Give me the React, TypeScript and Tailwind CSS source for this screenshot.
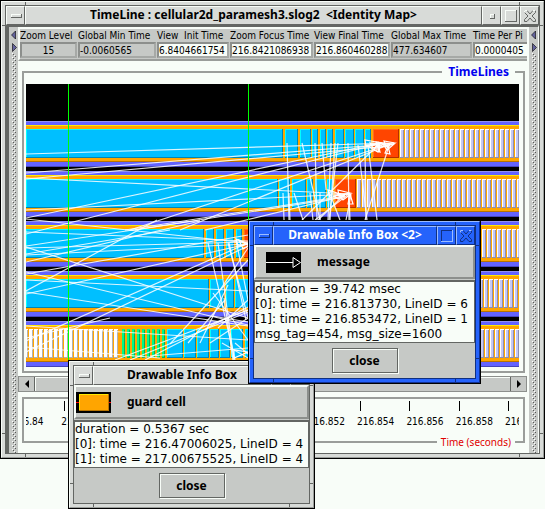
import React, { type ReactNode } from "react";

type Segment = [number, number, number, number];
type Span = [number, number];

/* ---------- timeline data (canvas coordinates) ---------- */

const ROW_TOPS = [121, 171, 221, 271, 321];

const CELLS: { top: number; color: "blue" | "red"; spans: Span[] }[] = [
  { top: 129, color: "blue", spans: [[26, 283], [285, 298], [300, 311], [312, 318], [320, 326], [327, 333], [335, 344], [345, 354], [355, 364], [365, 371]] },
  { top: 129, color: "red", spans: [[373, 399]] },
  { top: 179, color: "blue", spans: [[26, 278], [279, 290], [292, 306], [307, 313], [315, 326], [327, 333]] },
  { top: 179, color: "red", spans: [[335, 356]] },
  { top: 229, color: "blue", spans: [[26, 204], [206, 214], [216, 224], [226, 234], [236, 242]] },
  { top: 229, color: "red", spans: [[244, 262]] },
  { top: 279, color: "blue", spans: [[26, 209], [210, 224], [226, 234], [235, 260]] },
  { top: 329, color: "blue", spans: [[167, 183], [184, 196], [197, 209], [210, 219], [220, 230], [231, 243], [245, 260]] },
];

const STRIPES: { top: number; from: number; to: number; face: string; edge: string; shade: string; width: number }[] = [
  { top: 129, from: 400, to: 519, face: "#c5c8f5", edge: "#ffffff", shade: "#8c8fb4", width: 4 },
  { top: 179, from: 357, to: 519, face: "#c5c8f5", edge: "#ffffff", shade: "#8c8fb4", width: 4 },
  { top: 229, from: 482, to: 519, face: "#c5c8f5", edge: "#ffffff", shade: "#8c8fb4", width: 4 },
  { top: 279, from: 479, to: 519, face: "#c5c8f5", edge: "#ffffff", shade: "#8c8fb4", width: 4 },
  { top: 329, from: 480, to: 519, face: "#c5c8f5", edge: "#ffffff", shade: "#8c8fb4", width: 4 },
  { top: 329, from: 24, to: 118, face: "#ffffff", edge: "#ffffff", shade: "#b2b2b2", width: 4 },
  { top: 329, from: 122, to: 166, face: "#00f884", edge: "#00f884", shade: "#00b060", width: 3 },
];

const MESSAGES: Segment[] = [
  [26, 154, 394, 143], [26, 173, 390, 144], [26, 179, 390, 146], [26, 218, 380, 143],
  [26, 234, 378, 144], [130, 230, 390, 144], [180, 230, 388, 145], [26, 210, 350, 194],
  [26, 178, 350, 194], [26, 219, 248, 243], [125, 230, 345, 196], [135, 230, 345, 197],
  [205, 230, 345, 196], [26, 232, 248, 241], [26, 246, 200, 220], [26, 248, 248, 242],
  [26, 255, 248, 244], [26, 254, 170, 230], [26, 262, 200, 221], [26, 291, 157, 220],
  [26, 247, 248, 318], [26, 272, 248, 325], [26, 280, 248, 291], [26, 274, 248, 235],
  [26, 294, 248, 244], [26, 292, 248, 326], [26, 341, 248, 243], [26, 352, 248, 246],
  [115, 360, 248, 310], [130, 360, 248, 312], [145, 360, 248, 307], [26, 326, 248, 340],
  [26, 338, 110, 318], [26, 347, 160, 358], [150, 356, 248, 348], [208, 243, 235, 360],
  [218, 243, 234, 360], [228, 243, 250, 325], [229, 243, 246, 320], [213, 293, 248, 340],
  [170, 344, 248, 260], [188, 343, 225, 300], [200, 343, 228, 285], [210, 343, 248, 318],
  [222, 343, 248, 358], [235, 343, 248, 354], [220, 290, 248, 248], [224, 298, 233, 360],
  [210, 325, 248, 310], [218, 328, 248, 300], [212, 316, 248, 322], [236, 240, 248, 300],
  [287, 143, 289, 220], [302, 143, 320, 220], [315, 143, 317, 220], [322, 143, 326, 190],
  [331, 143, 328, 220], [335, 143, 330, 220], [338, 143, 329, 220], [348, 143, 349, 220],
  [358, 145, 367, 220], [365, 148, 366, 220], [368, 145, 377, 220], [389, 146, 365, 220],
  [302, 220, 380, 143], [283, 193, 284, 220], [289, 193, 290, 220], [294, 193, 303, 220],
  [310, 193, 313, 220], [315, 220, 350, 193], [318, 220, 345, 194], [320, 193, 320, 220],
  [330, 194, 340, 220], [351, 195, 346, 220], [349, 195, 350, 220],
];

const ARROWS: string[] = [
  "395,143 384,141 386,147", "394,144 383,144 387,150", "382,143 365,140 366,147",
  "380,144 366,145 378,152", "388,146 385,153 390,154", "378,143 374,150 380,152",
  "392,144 376,142 378,148", "386,144 370,143 373,148", "350,193 338,190 339,196",
  "351,194 338,194 343,200", "340,194 328,190 330,198", "345,195 334,196 338,199",
  "350,194 348,204 353,204", "249,244 236,239 238,246", "249,246 239,240 243,249",
  "248,352 234,350 234,358",
];

const TRACK_VALUES = ["216.84", "216.842", "216.844", "216.846", "216.848", "216.850", "216.852", "216.854", "216.856", "216.858", "216.860"];

const ZOOM_FIELDS: { label: string; value: string; width: string; tone: string; align: string }[] = [
  { label: "Zoom Level", value: "15", width: "w-[57px]", tone: "bg-[#c6c9c6]", align: "text-center" },
  { label: "Global Min Time", value: "-0.0060565", width: "w-[78px]", tone: "bg-[#c6c9c6]", align: "text-left" },
  { label: "View  Init Time", value: "6.8404661754", width: "w-[72px]", tone: "bg-[#f8fdf8]", align: "text-left" },
  { label: "Zoom Focus Time", value: "216.8421086938", width: "w-[83px]", tone: "bg-[#f8fdf8]", align: "text-left" },
  { label: "View Final Time", value: "216.860460288", width: "w-[76px]", tone: "bg-[#f8fdf8]", align: "text-left" },
  { label: "Global Max Time", value: "477.634607", width: "w-[81px]", tone: "bg-[#c6c9c6]", align: "text-left" },
  { label: "Time Per Pi", value: "0.0000405", width: "w-[72px]", tone: "bg-[#f8fdf8]", align: "text-left" },
];

/* ---------- drawings ---------- */

function TimelineCanvas() {
  return (
    <svg viewBox="26 84 493 283" preserveAspectRatio="none" className="mt-1 block h-[283px] w-full" role="img" aria-label="TimeLines">
      <rect x="26" y="84" width="493" height="283" fill="#000" />
      <g shapeRendering="crispEdges">
        {ROW_TOPS.map((y) => (
          <g key={y}>
            <rect x="26" y={y} width="493" height="46" fill="#6363ff" />
            <rect x="26" y={y} width="493" height="1" fill="#8f8fee" />
            <rect x="26" y={y + 45} width="493" height="1" fill="#4646b8" />
            <rect x="26" y={y + 4} width="493" height="37" fill="#ffa500" />
            <rect x="26" y={y + 4} width="493" height="1" fill="#ffe800" />
            <rect x="26" y={y + 40} width="493" height="1" fill="#b87400" />
          </g>
        ))}
        {CELLS.map(({ top, color, spans }) =>
          spans.map(([a, b]) => (
            <g key={`${top}-${a}`}>
              <rect x={a} y={top} width={b - a} height="29" fill={color === "blue" ? "#00bfff" : "#ff4500"} />
              <path d={`M${a + 0.5} ${top + 29}V${top + 0.5}H${b}`} fill="none" stroke={color === "blue" ? "#00ffff" : "#ff6a20"} />
              <path d={`M${a} ${top + 28.5}H${b - 0.5}V${top}`} fill="none" stroke={color === "blue" ? "#0086b4" : "#b43000"} />
            </g>
          )),
        )}
        {STRIPES.map(({ top, from, to, face, edge, shade, width }) =>
          Array.from({ length: Math.ceil((to - from) / 5) }, (_, i) => from + i * 5).map((x) => (
            <g key={`${top}-${x}`}>
              <rect x={x} y={top} width={width} height="29" fill={face} />
              <path d={`M${x + 0.5} ${top + 29}V${top + 0.5}H${x + width}`} fill="none" stroke={edge} />
              <path d={`M${x} ${top + 28.5}H${x + width - 0.5}V${top + 1}`} fill="none" stroke={shade} />
            </g>
          )),
        )}
      </g>
      <g stroke="#fff" strokeOpacity="0.85" strokeWidth="1.2" fill="none">
        {MESSAGES.map(([x1, y1, x2, y2], i) => (
          <line key={i} x1={x1} y1={y1} x2={x2} y2={y2} />
        ))}
        {ARROWS.map((points) => (
          <polygon key={points} points={points} strokeOpacity="1" />
        ))}
      </g>
      <path d="M68.5 84V367M248.5 84V367" stroke="#00ff00" shapeRendering="crispEdges" />
    </svg>
  );
}

function Grip({ id }: { id: string }) {
  return (
    <div className="flex w-[9px] shrink-0 flex-col items-center bg-[#c6c9c6] pt-1">
      <svg viewBox="0 0 8 22" className="h-[22px] w-2 shrink-0" aria-hidden="true">
        <path d="M5.5 0V8L1.5 4Z" fill="#63639c" stroke="#000" strokeWidth="0.6" />
        <path d="M2.5 12.500V20.500L6.500 16.500Z" fill="#63639c" stroke="#000" strokeWidth="0.6" />
      </svg>
      <svg className="w-1 flex-1" aria-hidden="true" shapeRendering="crispEdges">
        <defs>
          <pattern id={id} width="4" height="4" patternUnits="userSpaceOnUse">
            <rect width="1" height="1" fill="#fff" />
            <rect x="2" y="2" width="1" height="1" fill="#fff" />
            <rect x="1" y="1" width="1" height="1" fill="#555" />
            <rect x="3" y="3" width="1" height="1" fill="#555" />
          </pattern>
        </defs>
        <rect width="100%" height="100%" fill={`url(#${id})`} />
      </svg>
    </div>
  );
}

/* ---------- window chrome ---------- */

const CHROME = {
  grey: {
    frame: "bg-[#d8dbd8] border-t-[#f8fdf8] border-l-[#f8fdf8] border-r-[#9a9d9a] border-b-[#9a9d9a]",
    inner: "border-[#636663]",
    bar: "bg-[#d8dbd8] text-black",
    button: "border-t-[#f8fdf8] border-l-[#f8fdf8] border-r-[#636663] border-b-[#636663]",
    notch: "bg-[#636663]",
    light: "#f8fdf8",
    dark: "#636663",
  },
  blue: {
    frame: "bg-[#2563fb] border-t-[#9cbcff] border-l-[#9cbcff] border-r-[#103090] border-b-[#103090]",
    inner: "border-[#103080]",
    bar: "bg-[#2563fb] text-white",
    button: "border-t-[#9cbcff] border-l-[#9cbcff] border-r-[#103080] border-b-[#103080]",
    notch: "bg-[#103080]",
    light: "#9cbcff",
    dark: "#103080",
  },
};

type Tone = keyof typeof CHROME;

function ChromeButton({ tone, kind, label }: { tone: Tone; kind: "menu" | "dot" | "box" | "close"; label: string }) {
  const c = CHROME[tone];
  return (
    <button type="button" aria-label={label} className={`flex w-[19px] shrink-0 items-center justify-center border ${c.button}`}>
      <svg viewBox="0 0 16 16" className="size-4 shrink-0" fill="none" shapeRendering={kind === "close" ? "auto" : "crispEdges"}>
        {kind === "menu" && (
          <>
            <path d="M3.500 9.500V6.500H13" stroke={c.light} />
            <path d="M3 9.500H13.500V6" stroke={c.dark} />
          </>
        )}
        {kind === "dot" && (
          <>
            <path d="M6.500 10V6.500H10" stroke={c.light} />
            <path d="M6 10.500H10.500V6" stroke={c.dark} />
          </>
        )}
        {kind === "box" && (
          <>
            <path d="M2.500 13V2.500H13" stroke={tone === "grey" ? c.light : c.dark} />
            <path d="M2 13.500H13.500V2" stroke={tone === "grey" ? c.dark : c.light} />
          </>
        )}
        {kind === "close" && (
          <>
            <path d="M2.500 2.500H5L8 6L11 2.500H13.500V4.500L10 8L13.500 11.500V13.500H11L8 10L5 13.500H2.500V11.500L6 8L2.500 4.500Z" stroke={c.dark} />
            <path d="M2.500 4.500V2.500H5M11 2.500H13.500" stroke={c.light} />
          </>
        )}
      </svg>
    </button>
  );
}

function WindowFrame({ tone, title, dot = false, children }: { tone: Tone; title: ReactNode; dot?: boolean; children: ReactNode }) {
  const c = CHROME[tone];
  return (
    <div className="border border-black">
      <div className={`relative border p-[3px] ${c.frame}`}>
        <span className={`absolute top-0 left-[23px] h-1 w-px ${c.notch}`} />
        <span className={`absolute top-0 right-[23px] h-1 w-px ${c.notch}`} />
        <span className={`absolute bottom-0 left-[23px] h-1 w-px ${c.notch}`} />
        <span className={`absolute right-[23px] bottom-0 h-1 w-px ${c.notch}`} />
        <span className={`absolute top-[23px] left-0 h-px w-1 ${c.notch}`} />
        <span className={`absolute top-[23px] right-0 h-px w-1 ${c.notch}`} />
        <span className={`absolute bottom-[23px] left-0 h-px w-1 ${c.notch}`} />
        <span className={`absolute right-0 bottom-[23px] h-px w-1 ${c.notch}`} />
        <div className={`border ${c.inner}`}>
          <header className={`flex h-[19px] ${c.bar}`}>
            <ChromeButton tone={tone} kind="menu" label="Window menu" />
            <h2 className={`min-w-0 flex-1 overflow-hidden border text-center text-[12px] leading-4 font-bold whitespace-pre ${c.button}`}>{title}</h2>
            {dot && <ChromeButton tone={tone} kind="dot" label="Minimize" />}
            <ChromeButton tone={tone} kind="box" label="Maximize" />
            <ChromeButton tone={tone} kind="close" label="Close window" />
          </header>
          {children}
        </div>
      </div>
    </div>
  );
}

function InfoBox({ tone, title, icon, name, text }: { tone: Tone; title: string; icon: ReactNode; name: string; text: string[] }) {
  return (
    <WindowFrame tone={tone} title={title}>
      <div className="bg-[#c6c9c6] pb-[5px]">
        <div className="flex h-[34px] items-center border-2 border-t-[#f8fdf8] border-r-[#8c8f8c] border-b-[#8c8f8c] border-l-[#f8fdf8]">
          {icon}
          <span className="text-[12px] leading-4 font-bold">{name}</span>
        </div>
        <div className="mt-px border border-t-2 border-[#636663] bg-[#f8fdf8] font-['DejaVu_Sans',sans-serif] text-[12px] leading-[15px] whitespace-nowrap">
          {text.map((line) => (
            <p key={line}>{line}</p>
          ))}
        </div>
        <div className="mt-[5px] flex justify-center">
          <button type="button" className="h-[25px] w-[66px] border border-[#636663] text-[12px] leading-4 font-bold shadow-[inset_1px_1px_0_#f8fdf8,1px_1px_0_#f8fdf8]">
            close
          </button>
        </div>
      </div>
    </WindowFrame>
  );
}

/* ---------- page ---------- */

export default function App() {
  return (
    <div className="relative min-h-screen overflow-hidden bg-[#f8fdf8] font-['Noto_Sans','DejaVu_Sans',sans-serif] text-black">
      <WindowFrame tone="grey" title="TimeLine : cellular2d_paramesh3.slog2  <Identity Map>" dot>
        <div className="flex border-t-2 border-r border-l-[3px] border-[#636663] border-r-[#f8fdf8] bg-[#f8fdf8]">
          <Grip id="grip-left" />
          <main className="min-w-0 flex-1">
            <div className="mr-0.5 flex h-[34px] gap-px overflow-hidden border-2 border-t-[#f8fdf8] border-r-0 border-b-[#9a9d9a] border-l-[#f8fdf8] bg-[#c6c9c6] font-['DejaVu_Sans_Condensed','DejaVu_Sans',sans-serif] text-[10px]">
              {ZOOM_FIELDS.map((f) => (
                <label key={f.label} className={`block shrink-0 ${f.width}`}>
                  <span className="block h-[13px] leading-[13px] whitespace-pre">{f.label}</span>
                  <input readOnly defaultValue={f.value} className={`block h-4 w-full border-2 border-t-[#8c8f8c] border-r-[#a6a9a6] border-b-[#a6a9a6] border-l-[#8c8f8c] text-[10px] leading-3 ${f.tone} ${f.align}`} />
                </label>
              ))}
            </div>
            <fieldset className="mx-1 mt-0.5 border-2 border-[#9a9d9a] pr-1 pb-1 pl-0.5">
              <legend className="mr-1 ml-auto px-1.5 text-[12px] leading-[17px] font-bold text-[#0000f0]">TimeLines</legend>
              <TimelineCanvas />
            </fieldset>
            <div className="mt-[3px] mr-0.5 flex h-4 border border-[#8c8f8c] bg-[#c6c9c6]">
              <button type="button" aria-label="Scroll left" className="flex w-4 items-center justify-center border-r border-[#636663]">
                <svg viewBox="0 0 8 8" className="size-2"><path d="M6 0V8L2 4Z" /></svg>
              </button>
              <div className="flex-1 border-t border-l border-[#f8fdf8]" />
              <button type="button" aria-label="Scroll right" className="flex w-4 items-center justify-center border-l border-[#636663]">
                <svg viewBox="0 0 8 8" className="size-2"><path d="M2 0V8L6 4Z" /></svg>
              </button>
            </div>
            <div className="relative mx-1 mt-[5px] mb-2.5 h-[46px] border-2 border-[#9a9d9a] pr-1 pl-0.5">
              <div className="overflow-hidden font-['DejaVu_Sans_Condensed','DejaVu_Sans',sans-serif]">
                <div className="relative -left-3.5 flex">
                  {TRACK_VALUES.map((v) => (
                    <div key={v} className="w-1/10 shrink-0 pt-0.5 text-[10px] leading-[13px]">
                      <div className="mb-1 ml-[3px] h-2.5 w-px bg-black" />
                      {v}
                    </div>
                  ))}
                </div>
              </div>
              <span className="absolute right-2 -bottom-2 bg-[#f8fdf8] px-1 text-[10px] leading-[14px] text-[#e00000]">Time (seconds)</span>
            </div>
          </main>
          <Grip id="grip-right" />
        </div>
      </WindowFrame>

      <div className="absolute top-[360px] left-[68px] w-[247px]">
        <InfoBox
          tone="grey"
          title="Drawable Info Box"
          name="guard cell"
          text={["duration = 0.5367 sec", "[0]: time = 216.47006025, LineID = 4", "[1]: time = 217.00675525, LineID = 4"]}
          icon={
            <svg viewBox="0 0 35 21" className="mr-4 h-[21px] w-[35px]" shapeRendering="crispEdges" aria-hidden="true">
              <rect width="35" height="21" />
              <path d="M0 10.500H35" stroke="#f00" />
              <rect x="3" y="2" width="30" height="17" fill="#ffa500" />
              <path d="M3.500 19V2.500H33" fill="none" stroke="#ffe800" />
              <path d="M3 18.500H32.500V2" fill="none" stroke="#b87400" />
            </svg>
          }
        />
      </div>

      <div className="absolute top-[220px] left-[248px] w-[233px]">
        <InfoBox
          tone="blue"
          title="Drawable Info Box <2>"
          name="message"
          text={["duration = 39.742 msec", "[0]: time = 216.813730, LineID = 6", "[1]: time = 216.853472, LineID = 1", "msg_tag=454, msg_size=1600"]}
          icon={
            <svg viewBox="0 0 35 21" className="mr-4 ml-2.5 h-[21px] w-[35px]" aria-hidden="true">
              <rect width="35" height="21" />
              <path d="M0 10.500H27M27 5.500V15.500L34.500 10.500Z" fill="none" stroke="#fff" />
            </svg>
          }
        />
      </div>
    </div>
  );
}
